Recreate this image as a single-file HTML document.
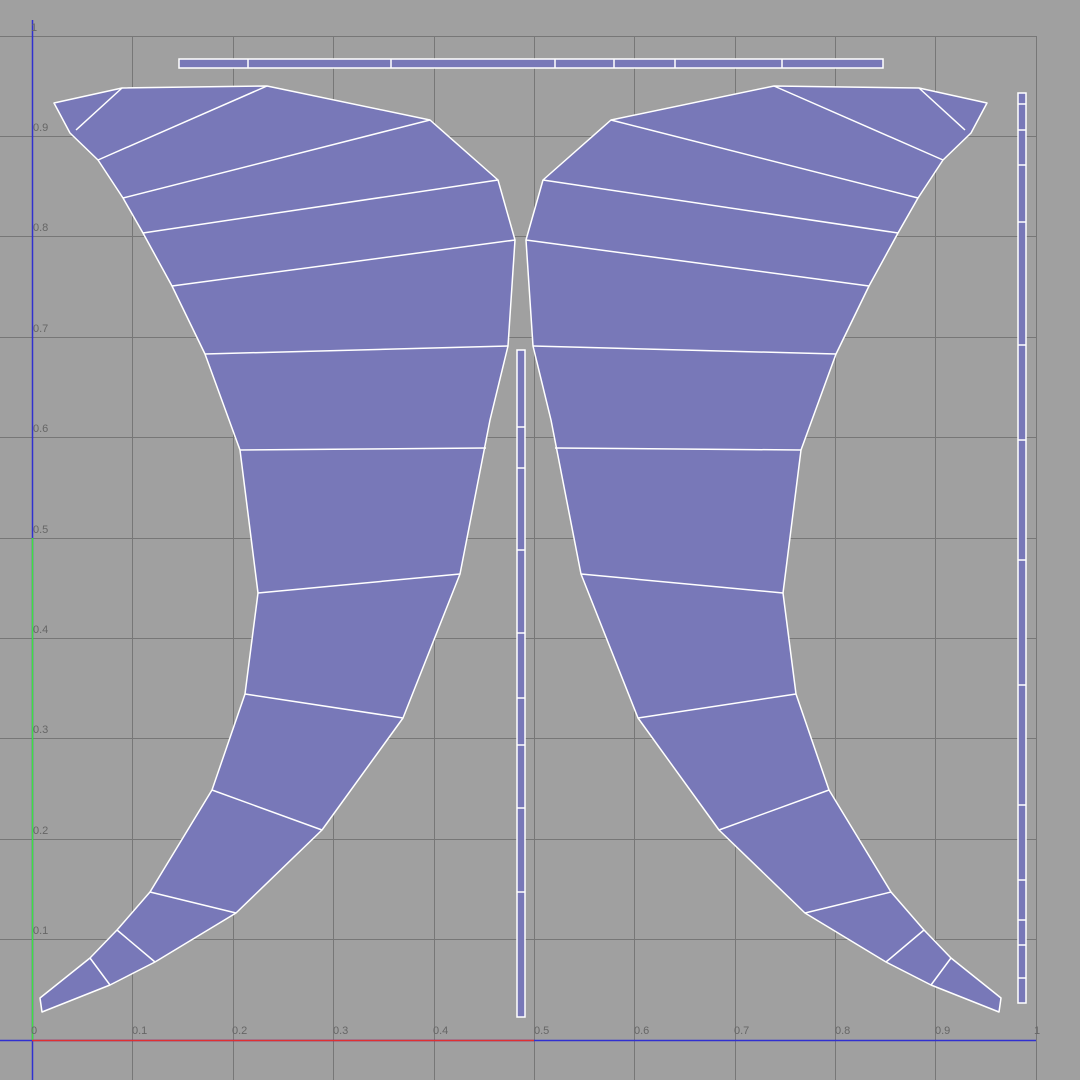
<!DOCTYPE html>
<html><head><meta charset="utf-8"><style>
html,body{margin:0;padding:0;background:#a0a0a0;width:1080px;height:1080px;overflow:hidden}
svg{display:block}
text{font-family:"Liberation Sans",sans-serif;font-size:11px;fill:#666}
</style></head><body>
<svg width="1080" height="1080" viewBox="0 0 1080 1080" xmlns="http://www.w3.org/2000/svg">
<rect width="1080" height="1080" fill="#a0a0a0"/>
<g stroke="#777" stroke-width="1">
<line x1="132.5" y1="36" x2="132.5" y2="1080"/><line x1="233.5" y1="36" x2="233.5" y2="1080"/>
<line x1="333.5" y1="36" x2="333.5" y2="1080"/><line x1="434.5" y1="36" x2="434.5" y2="1080"/>
<line x1="534.5" y1="36" x2="534.5" y2="1080"/><line x1="634.5" y1="36" x2="634.5" y2="1080"/>
<line x1="735.5" y1="36" x2="735.5" y2="1080"/><line x1="835.5" y1="36" x2="835.5" y2="1080"/>
<line x1="935.5" y1="36" x2="935.5" y2="1080"/><line x1="1036.5" y1="36" x2="1036.5" y2="1080"/>
<line x1="0" y1="36.5" x2="1036" y2="36.5"/><line x1="0" y1="136.5" x2="1036" y2="136.5"/>
<line x1="0" y1="236.5" x2="1036" y2="236.5"/><line x1="0" y1="337.5" x2="1036" y2="337.5"/>
<line x1="0" y1="437.5" x2="1036" y2="437.5"/><line x1="0" y1="538.5" x2="1036" y2="538.5"/>
<line x1="0" y1="638.5" x2="1036" y2="638.5"/><line x1="0" y1="738.5" x2="1036" y2="738.5"/>
<line x1="0" y1="839.5" x2="1036" y2="839.5"/><line x1="0" y1="939.5" x2="1036" y2="939.5"/>
</g>
<line x1="32.5" y1="20" x2="32.5" y2="1080" stroke="#3030d0" stroke-width="1.5"/>
<line x1="0" y1="1040.5" x2="1036" y2="1040.5" stroke="#3030d0" stroke-width="1.5"/>
<line x1="32.5" y1="538" x2="32.5" y2="1040" stroke="#40e040" stroke-width="1.5"/>
<line x1="32" y1="1040.5" x2="534" y2="1040.5" stroke="#e03030" stroke-width="1.5"/>
<g>
<text x="31" y="31">1</text>
<text x="33" y="131">0.9</text><text x="33" y="231">0.8</text><text x="33" y="332">0.7</text>
<text x="33" y="432">0.6</text><text x="33" y="533">0.5</text><text x="33" y="633">0.4</text>
<text x="33" y="733">0.3</text><text x="33" y="834">0.2</text><text x="33" y="934">0.1</text>
<text x="31" y="1034">0</text><text x="132" y="1034">0.1</text><text x="232" y="1034">0.2</text>
<text x="333" y="1034">0.3</text><text x="433" y="1034">0.4</text><text x="534" y="1034">0.5</text>
<text x="634" y="1034">0.6</text><text x="734" y="1034">0.7</text><text x="835" y="1034">0.8</text>
<text x="935" y="1034">0.9</text><text x="1034" y="1034">1</text>
</g>
<g id="wing" fill="#7878b8" stroke="#fff" stroke-width="1.5" stroke-linejoin="round">
<polygon points="54,103 122,88 267,86 430,120 498,180 515,240 508,346 490,420 460,574 403,718 322,830 236,913 155,962 110,985 42,1012 40,998 90,958 117,930 150,892 212,790 245,694 258,593 240,450 205,354 172,286 143,233 123,198 98,160 70,133"/>
<g fill="none">
<line x1="76" y1="130" x2="122" y2="88"/><line x1="98" y1="160" x2="267" y2="86"/>
<line x1="123" y1="198" x2="430" y2="120"/><line x1="143" y1="233" x2="498" y2="180"/>
<line x1="172" y1="286" x2="515" y2="240"/><line x1="205" y1="354" x2="508" y2="346"/>
<line x1="240" y1="450" x2="486" y2="448"/><line x1="258" y1="593" x2="460" y2="574"/>
<line x1="245" y1="694" x2="403" y2="718"/><line x1="212" y1="790" x2="322" y2="830"/>
<line x1="150" y1="892" x2="236" y2="913"/><line x1="117" y1="930" x2="155" y2="962"/>
<line x1="90" y1="958" x2="110" y2="985"/>
</g>
</g>
<use href="#wing" transform="translate(1041,0) scale(-1,1)"/>
<g fill="#7878b8" stroke="#fff" stroke-width="1.5">
<rect x="179" y="59" width="704" height="9"/>
<rect x="517" y="350" width="8" height="667"/>
<rect x="1018" y="93" width="8" height="910"/>
</g>
<g stroke="#fff" stroke-width="1.5">
<line x1="248" y1="59" x2="248" y2="68"/><line x1="391" y1="59" x2="391" y2="68"/>
<line x1="555" y1="59" x2="555" y2="68"/><line x1="614" y1="59" x2="614" y2="68"/>
<line x1="675" y1="59" x2="675" y2="68"/><line x1="782" y1="59" x2="782" y2="68"/>
<line x1="517" y1="427" x2="525" y2="427"/><line x1="517" y1="468" x2="525" y2="468"/>
<line x1="517" y1="550" x2="525" y2="550"/><line x1="517" y1="633" x2="525" y2="633"/>
<line x1="517" y1="698" x2="525" y2="698"/><line x1="517" y1="745" x2="525" y2="745"/>
<line x1="517" y1="808" x2="525" y2="808"/><line x1="517" y1="892" x2="525" y2="892"/>
<line x1="1018" y1="104" x2="1026" y2="104"/><line x1="1018" y1="130" x2="1026" y2="130"/>
<line x1="1018" y1="165" x2="1026" y2="165"/><line x1="1018" y1="222" x2="1026" y2="222"/>
<line x1="1018" y1="345" x2="1026" y2="345"/><line x1="1018" y1="440" x2="1026" y2="440"/>
<line x1="1018" y1="560" x2="1026" y2="560"/><line x1="1018" y1="685" x2="1026" y2="685"/>
<line x1="1018" y1="805" x2="1026" y2="805"/><line x1="1018" y1="880" x2="1026" y2="880"/>
<line x1="1018" y1="920" x2="1026" y2="920"/><line x1="1018" y1="945" x2="1026" y2="945"/>
<line x1="1018" y1="978" x2="1026" y2="978"/>
</g>
</svg>
</body></html>
